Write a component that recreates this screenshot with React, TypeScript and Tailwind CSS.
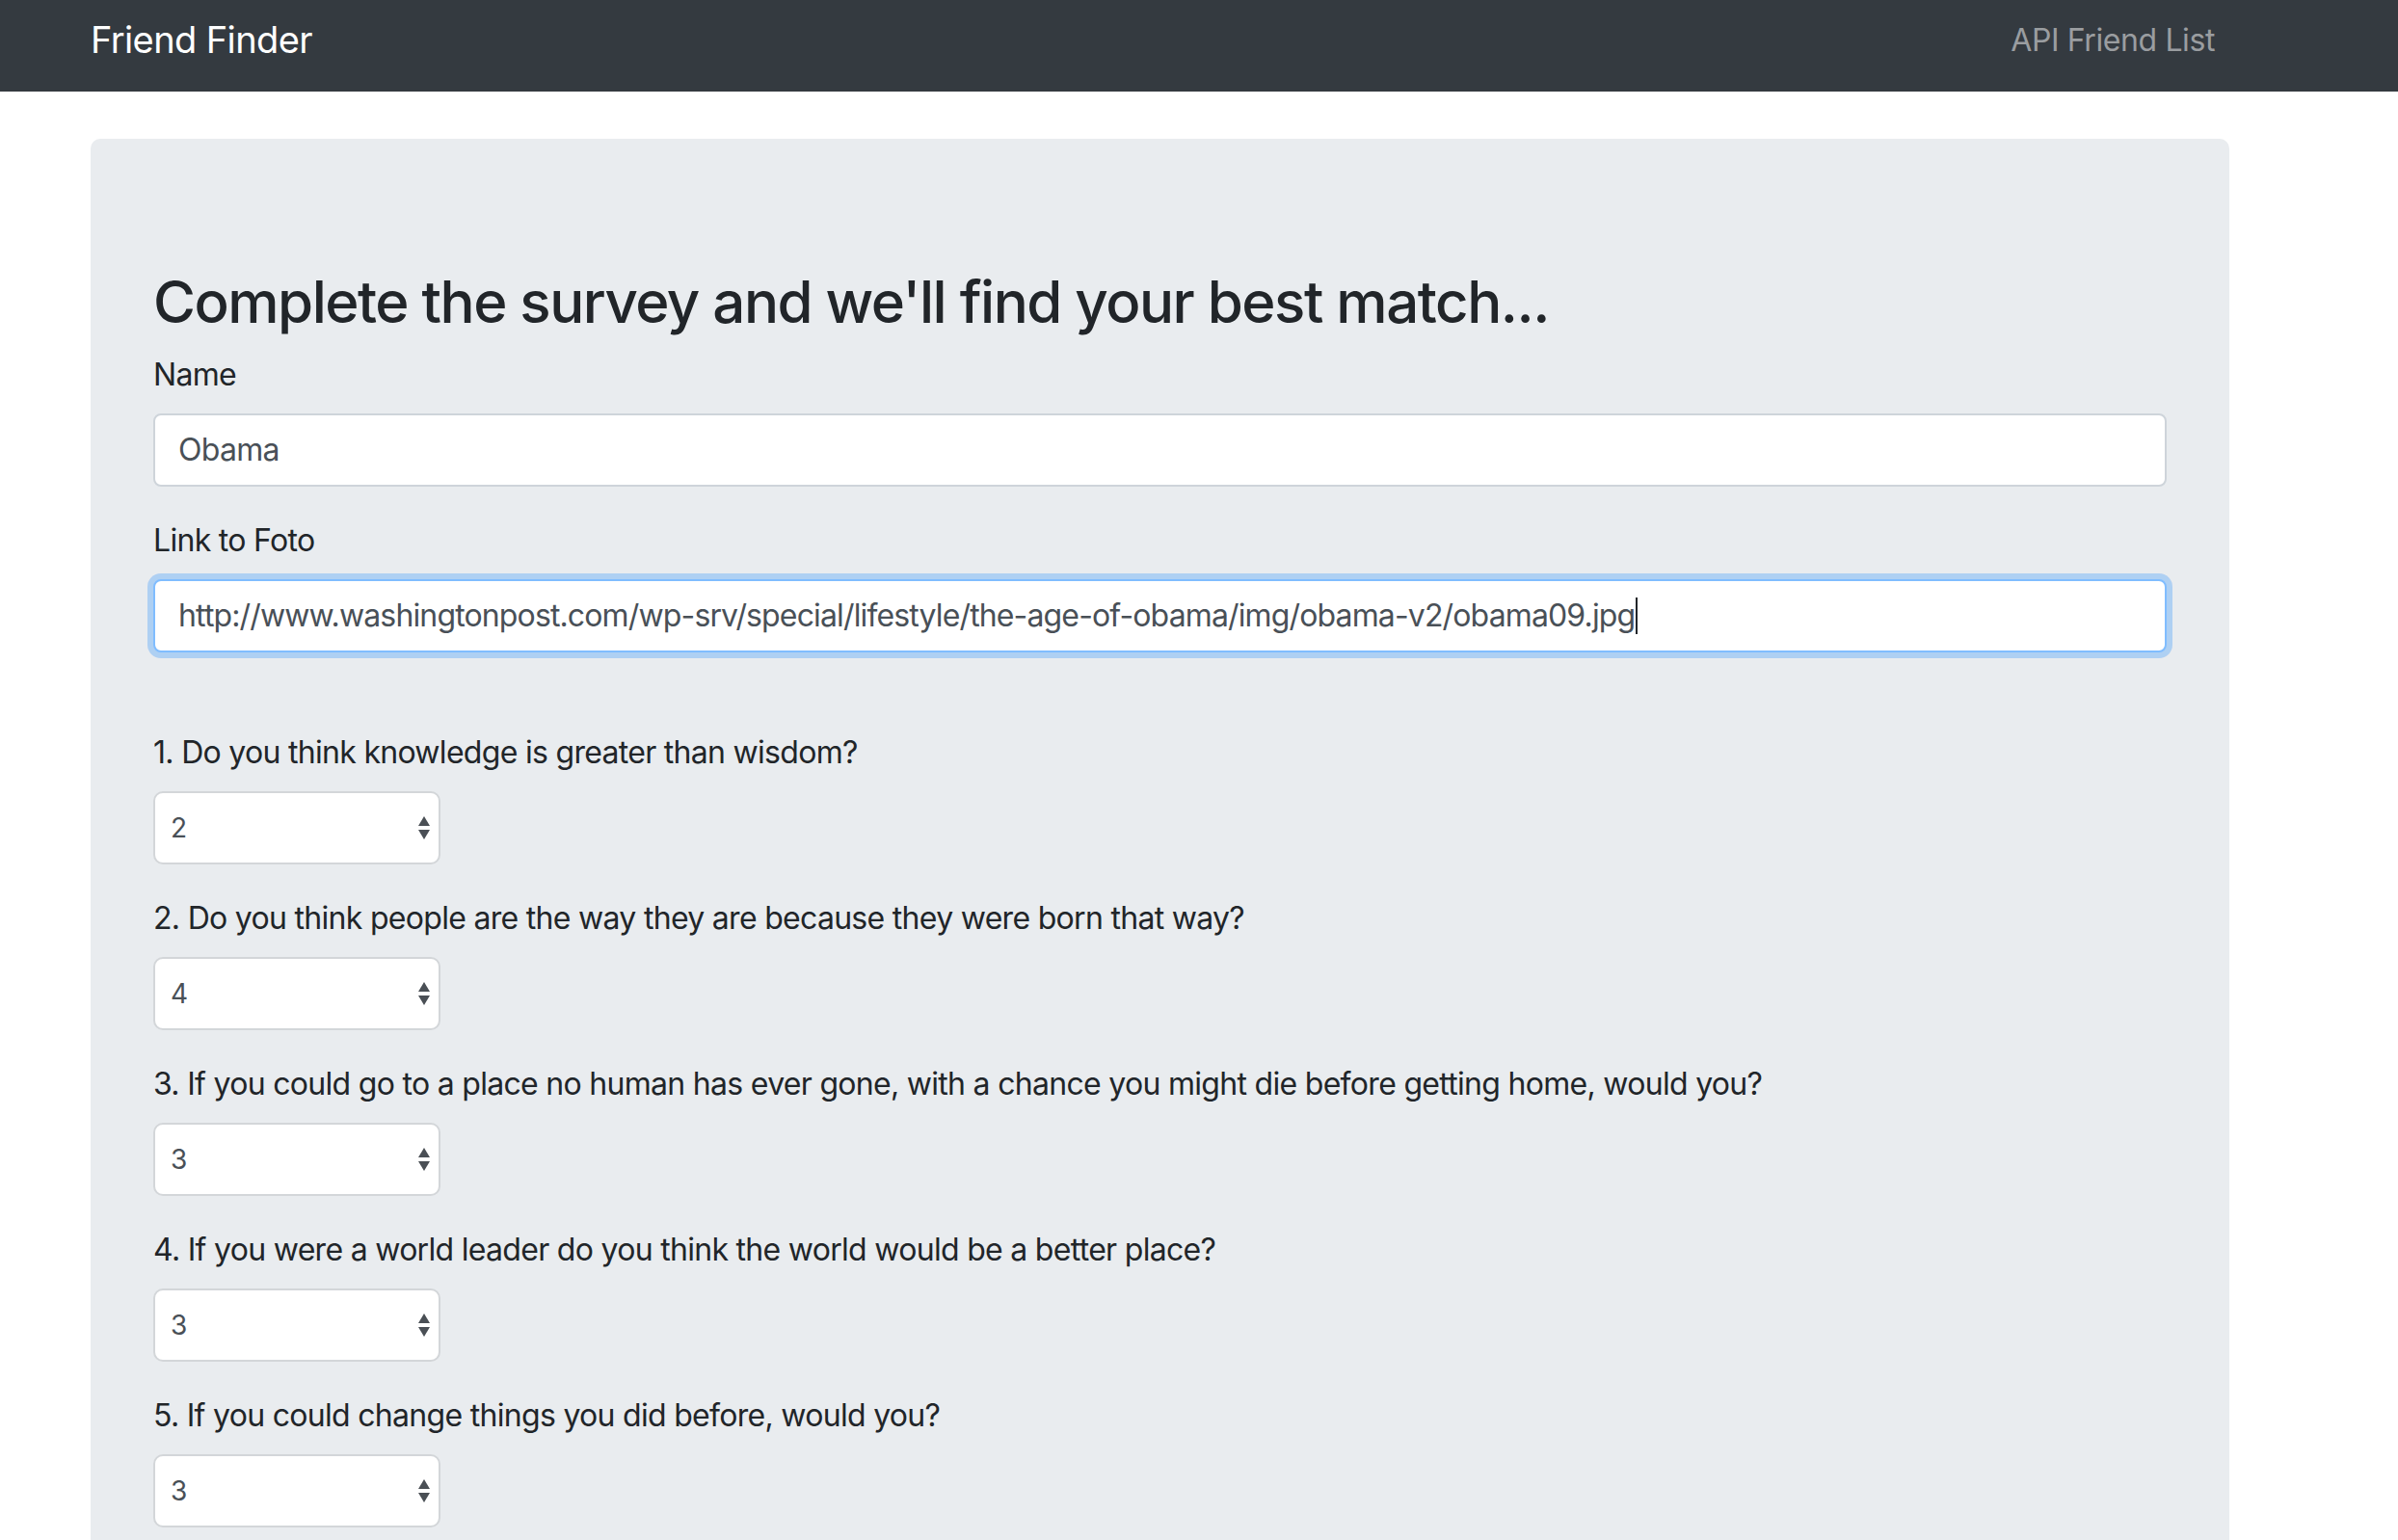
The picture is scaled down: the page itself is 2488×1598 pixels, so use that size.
const questions = [
  { q: "1. Do you think knowledge is greater than wisdom?", v: "2" },
  { q: "2. Do you think people are the way they are because they were born that way?", v: "4" },
  { q: "3. If you could go to a place no human has ever gone, with a chance you might die before getting home, would you?", v: "3" },
  { q: "4. If you were a world leader do you think the world would be a better place?", v: "3" },
  { q: "5. If you could change things you did before, would you?", v: "3" },
];

const Arrows = () => (
  <svg width="14" height="28" viewBox="0 0 14 28" className="absolute right-[10px] top-1/2 -translate-y-1/2 pointer-events-none">
    <path d="M7 2 L13 12 L1 12 Z" fill="#4a4f55" />
    <path d="M1 16 L13 16 L7 26 Z" fill="#4a4f55" />
  </svg>
);

const App = () => {
  return (
    <div className="min-h-screen bg-white font-['Inter',sans-serif] text-[#212529] tracking-[-0.7px]">
      <nav className="h-[95px] bg-[#343a40] flex items-center justify-between pl-[94px] pr-[190px] pb-[12px]">
        <span className="text-white text-[38px] tracking-[-0.6px]">Friend Finder</span>
        <span className="text-[#9a9da0] text-[32px] tracking-[-0.4px]">API Friend List</span>
      </nav>

      <div className="pl-[94px] pr-[175px] pt-[49px]">
        <div className="bg-[#e9ecef] rounded-[10px] px-[65px] pt-[131px] pb-[128px]">
          <h2 className="text-[60px] font-medium leading-[77px] mb-[13px] tracking-[-1.5px]">
            Complete the survey and we'll find your best match...
          </h2>

          <div className="mb-[32px]">
            <label className="block text-[32px] leading-[48px] mb-[16px]">Name</label>
            <div className="h-[76px] bg-white border-2 border-[#ced4da] rounded-[8px] px-[24px] flex items-center text-[32px] text-[#495057]">
              Obama
            </div>
          </div>

          <div className="mb-[80px]">
            <label className="block text-[32px] leading-[48px] mb-[16px]">Link to Foto</label>
            <div className="h-[76px] bg-white border-2 border-[#80bdff] rounded-[8px] px-[24px] flex items-center text-[32px] text-[#495057] shadow-[0_0_0_6px_rgba(0,123,255,0.25)] tracking-[-0.86px]">
              <span>http://www.washingtonpost.com/wp-srv/special/lifestyle/the-age-of-obama/img/obama-v2/obama09.jpg</span>
              <span className="inline-block w-[2px] h-[38px] bg-[#212529] ml-[1px]" />
            </div>
          </div>

          {questions.map((item) => (
            <div key={item.q} className="mb-[32px]">
              <label className="block text-[32px] leading-[48px] mb-[16px]">{item.q}</label>
              <div className="relative w-[298px] h-[76px]">
                <select
                  defaultValue={item.v}
                  className="appearance-none w-full h-full bg-white border-2 border-[#d3d6d9] rounded-[10px] pl-[16px] text-[28px] text-[#495057] outline-none tracking-normal"
                >
                  {["1", "2", "3", "4", "5"].map((o) => (
                    <option key={o} value={o}>{o}</option>
                  ))}
                </select>
                <Arrows />
              </div>
            </div>
          ))}
        </div>
      </div>
    </div>
  );
};

export default App;
